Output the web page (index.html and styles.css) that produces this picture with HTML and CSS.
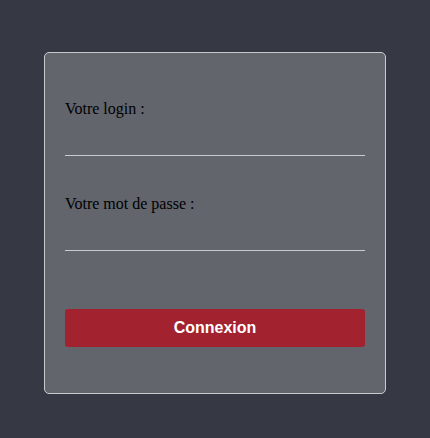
FILE: index.html
```html
<!DOCTYPE html>
<html lang="fr">
<head>
<meta charset="utf-8">
<title>Connexion</title>
<link rel="stylesheet" href="styles.css">
</head>
<body>
<form class="card">
  <div class="field">
    <label class="label" for="login">Votre login :</label>
    <input class="input" id="login" type="text">
  </div>
  <div class="field">
    <label class="label" for="pass">Votre mot de passe :</label>
    <input class="input" id="pass" type="password">
  </div>
  <button class="btn" type="button">Connexion</button>
</form>
</body>
</html>
```
FILE: styles.css
```css
html, body {
  margin: 0;
  padding: 0;
}
body {
  background: #363844;
  height: 438px;
  font-family: "Liberation Serif", serif;
  padding-top: 52px;
  box-sizing: border-box;
}
.card {
  box-sizing: border-box;
  width: 342px;
  margin: 0 0 0 44px;
  background: #62656c;
  border: 1px solid #c9cacd;
  border-radius: 5px;
  padding: 47px 20px 46px;
  display: flex;
  flex-direction: column;
}
.field {
  display: flex;
  flex-direction: column;
  margin-bottom: 39px;
}
.field + .field {
  margin-bottom: 58px;
}
.label {
  font-size: 16px;
  line-height: 18px;
  color: #000;
}
.input {
  box-sizing: border-box;
  height: 38px;
  background: transparent;
  border: none;
  border-bottom: 1px solid #c9cacd;
  outline: none;
  padding: 0;
  margin: 0;
  font-size: 16px;
}
.btn {
  box-sizing: border-box;
  height: 38px;
  width: 100%;
  background: #a2232f;
  color: #fff;
  border: none;
  border-radius: 3px;
  font-family: "Liberation Sans", Arial, sans-serif;
  font-weight: bold;
  font-size: 16px;
  padding: 0;
  margin: 0;
}
```
